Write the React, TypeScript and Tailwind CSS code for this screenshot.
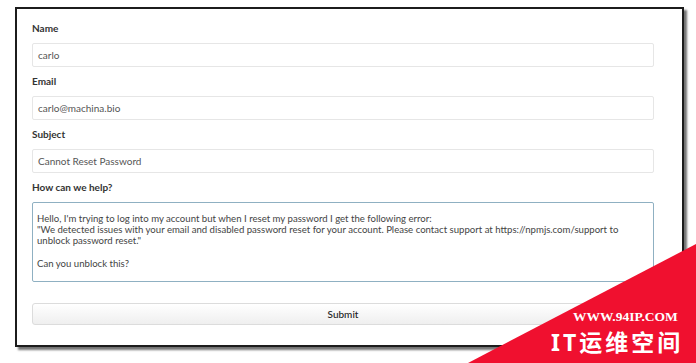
import React from "react";

const font = { fontFamily: "Lato, 'Noto Sans', sans-serif" };

function Field({ label, value }: { label: string; value: string }) {
  return (
    <div className="mb-[7px]">
      <div className="text-[10px] leading-[15px] font-bold text-[#333] mb-[7px]">{label}</div>
      <div className="h-[24px] border border-[#e6e6e6] rounded-[2px] bg-white flex items-center pl-[5px] text-[10px] text-[#555]">
        {value}
      </div>
    </div>
  );
}

export default function App() {
  return (
    <div className="relative w-[696px] h-[363px] bg-white overflow-hidden" style={font}>
      <div className="ml-[15px] mt-[7px] w-[669px] h-[340px] border-2 border-[#1c1c1c] bg-white shadow-[3px_3px_2px_rgba(0,0,0,0.55)] pl-[15px] pr-[28px] pt-[12px]">
        <Field label="Name" value="carlo" />
        <Field label="Email" value="carlo@machina.bio" />
        <Field label="Subject" value="Cannot Reset Password" />
        <div>
          <div className="text-[10px] leading-[15px] font-bold text-[#333] mb-[7px]">How can we help?</div>
          <div className="h-[80px] border border-[#8fb0c2] rounded-[2px] bg-white pl-[4px] pt-[10px] text-[9.6px] leading-[11.2px] text-[#444] whitespace-pre-wrap">
            {"Hello, I'm trying to log into my account but when I reset my password I get the following error:\n\"We detected issues with your email and disabled password reset for your account. Please contact support at https://npmjs.com/support to\nunblock password reset.\"\n\nCan you unblock this?"}
          </div>
        </div>
        <button className="mt-[21px] w-full h-[22px] border border-[#dcdcdc] rounded-[3px] bg-gradient-to-b from-white to-[#efefef] text-[10px] text-[#222] font-medium flex items-center justify-center">
          Submit
        </button>
      </div>

      <svg className="absolute left-0 top-0" width="696" height="363" viewBox="0 0 696 363">
        <polygon points="696,244 696,363 468,363" fill="#f0102f" />
      </svg>
      <div
        className="absolute left-[573px] top-[310px] text-[13.5px] font-bold text-white leading-none whitespace-nowrap"
        style={{ fontFamily: "'Liberation Serif', serif" }}
      >
        WWW.94IP.COM
      </div>
      <div
        className="absolute left-[551px] top-[331px] text-[23px] font-bold text-white tracking-[3px] leading-none whitespace-nowrap"
        style={{ fontFamily: "'Noto Sans', 'Noto Sans CJK SC', sans-serif" }}
      >
        IT运维空间
      </div>
    </div>
  );
}
